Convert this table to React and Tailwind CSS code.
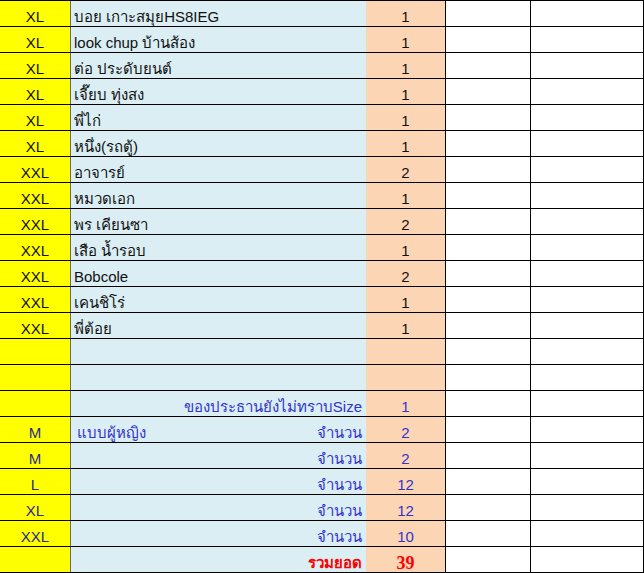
import React from 'react';

const rows = [
  { size: 'XL', name: 'บอย เกาะสมุยHS8IEG', qty: '1' },
  { size: 'XL', name: 'look chup บ้านส้อง', qty: '1' },
  { size: 'XL', name: 'ต่อ ประดับยนต์', qty: '1' },
  { size: 'XL', name: 'เจี๊ยบ ทุ่งสง', qty: '1' },
  { size: 'XL', name: 'พี่ไก่', qty: '1' },
  { size: 'XL', name: 'หนึ่ง(รถตู้)', qty: '1' },
  { size: 'XXL', name: 'อาจารย์', qty: '2' },
  { size: 'XXL', name: 'หมวดเอก', qty: '1' },
  { size: 'XXL', name: 'พร เคียนซา', qty: '2' },
  { size: 'XXL', name: 'เสือ น้ำรอบ', qty: '1' },
  { size: 'XXL', name: 'Bobcole', qty: '2' },
  { size: 'XXL', name: 'เคนชิโร่', qty: '1' },
  { size: 'XXL', name: 'พี่ต้อย', qty: '1' },
  {},
  {},
  { right: 'ของประธานยังไม่ทราบSize', qty: '1', blue: true },
  { size: 'M', left: 'แบบผู้หญิง', right: 'จำนวน', qty: '2', blue: true },
  { size: 'M', right: 'จำนวน', qty: '2', blue: true },
  { size: 'L', right: 'จำนวน', qty: '12', blue: true },
  { size: 'XL', right: 'จำนวน', qty: '12', blue: true },
  { size: 'XXL', right: 'จำนวน', qty: '10', blue: true },
  { right: 'รวมยอด', qty: '39', total: true },
];

function Row({ r }) {
  const sizeColor = r.blue ? 'text-[#2a2a8c]' : 'text-[#111]';
  return (
    <div className="flex h-[26px] border-t border-black">
      <div className={`w-[70px] bg-[#ffff00] flex items-end justify-center ${sizeColor}`}>
        {r.size}
      </div>
      <div className="w-px bg-[#6b6b6b]" />
      <div className="w-[295px] bg-[#daeef3] flex items-end justify-between pl-[3px] pr-[4px]">
        {r.name && <span className="text-[#111]">{r.name}</span>}
        {r.left ? <span className="pl-[3px] text-[#3333cc]">{r.left}</span> : <span />}
        {r.right && (
          <span className={r.total ? 'text-[#ff0000] font-bold' : 'text-[#3333cc]'}>{r.right}</span>
        )}
      </div>
      <div
        className={`w-[79px] bg-[#fcd5b4] flex items-end justify-center ${
          r.total
            ? "text-[#ff0000] font-bold text-[18px] font-['Liberation_Serif',serif]"
            : r.blue
            ? 'text-[#3333cc]'
            : 'text-[#111]'
        }`}
      >
        {r.qty}
      </div>
      <div className="w-px bg-black" />
      <div className="w-[84px] bg-white" />
      <div className="w-px bg-black" />
      <div className="w-[112px] bg-white" />
      <div className="w-px bg-black" />
    </div>
  );
}

export default function App() {
  return (
    <div className="w-[644px] h-[573px] bg-white overflow-hidden font-['Liberation_Sans','Noto_Sans','DejaVu_Sans',sans-serif] text-[15px] leading-[18px]">
      {rows.map((r, i) => (
        <Row key={i} r={r} />
      ))}
      <div className="h-px bg-black" />
    </div>
  );
}
